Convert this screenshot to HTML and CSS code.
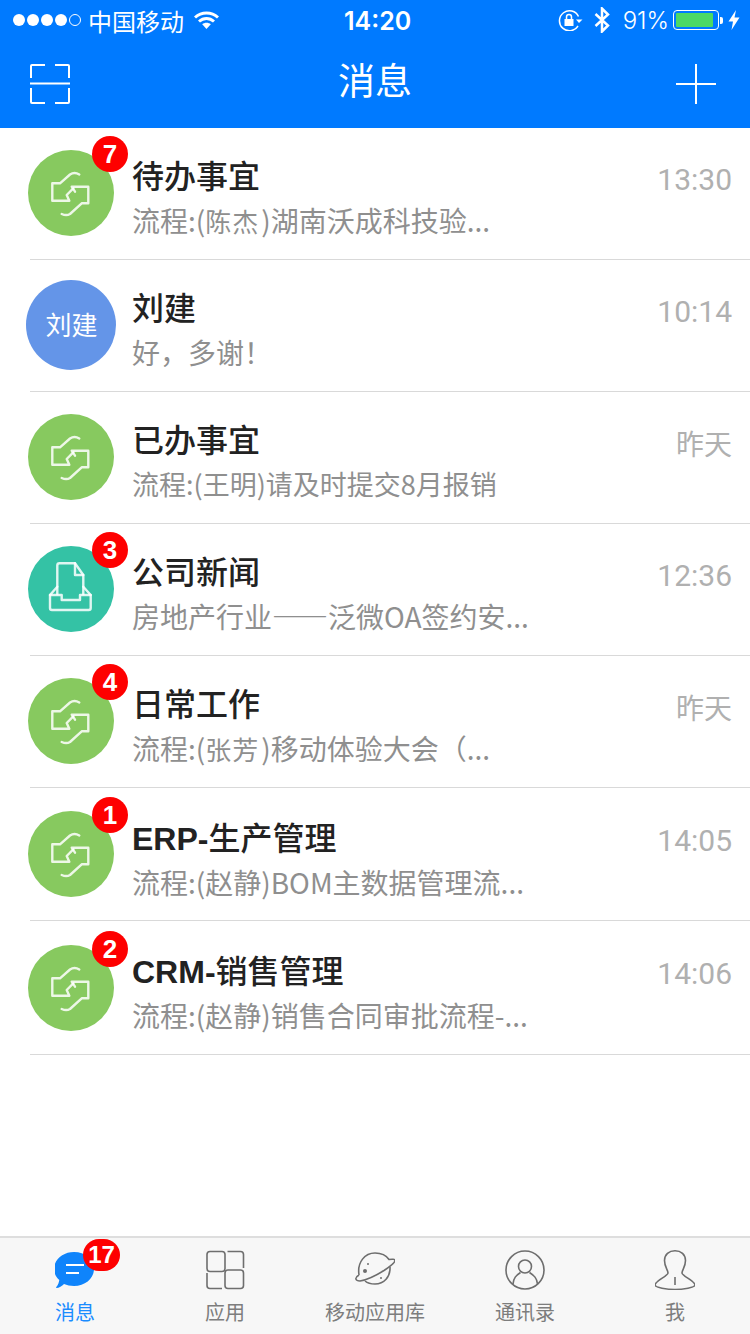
FILE: index.html
```html
<!DOCTYPE html>
<html lang="zh-CN">
    <head>
        <meta charset="UTF-8">
        <meta name="viewport" content="width=device-width, initial-scale=1.0">
        <title>消息</title>
        <link rel="stylesheet" href="styles.css">
    </head>
    <body>
        <svg class="defs" width="0" height="0">
            <symbol id="flow" viewBox="0 0 86 86">
                <path d="M51.3 24.500C48 22.500 45 22.500 42 24.500L32 33.300H24.300V50.700H41.300L38.700 45L45.300 38.300"/>
                <path d="M33.700 64C37 65.500 39.500 65.500 42 64L53.700 53.300H60.300V36.700H43.700L47 41.700"/>
            </symbol>
            <symbol id="inbox" viewBox="0 0 86 86">
                <path d="M29.300 48V19.500Q29.300 17.300 31.500 17.300H47L55.300 29V48"/>
                <path d="M47 17.300V29H55.300"/>
                <path d="M29.300 40.700L22 49V62Q22 64 24 64H60.700Q62.700 64 62.700 62V49L55.300 40.700"/>
                <path d="M22 49H33.700V54H52V49H62.700"/>
            </symbol>
        </svg>

        <div class="status-bar">
            <div class="status-left">
                <span class="signal">
                    <i class="dot"></i><i class="dot"></i><i class="dot"></i><i class="dot"></i><i class="dot dot-empty"></i>
                </span>
                <span class="carrier">中国移动</span>
                <svg class="wifi" width="25" height="20" viewBox="0 0 25 20">
                    <path d="M1 7.500C7.500 1.500 17.500 1.500 24 7.500"/>
                    <path d="M5 11.500C9.500 7.500 15.500 7.500 20 11.500"/>
                    <path class="wifi-tip" d="M8.200 14.200C10.500 12.200 14.500 12.200 16.800 14.200L12.500 19Z"/>
                </svg>
            </div>
            <span class="clock">14:20</span>
            <div class="status-right">
                <svg class="lock" width="25" height="22" viewBox="0 0 25 22">
                    <path class="lock-ring" d="M20 17A10 10 0 1 1 20.500 7.500"/>
                    <path class="lock-solid" d="M18 10.500H24.500L21 14Z"/>
                    <path class="lock-ring" d="M8.500 10V8A2.500 2.500 0 0 1 13.500 8V10"/>
                    <rect class="lock-solid" x="6.500" y="10" width="9" height="7"/>
                </svg>
                <svg class="bluetooth" width="16" height="26" viewBox="0 0 16 26">
                    <path d="M1.500 7L14 18.500L8 24.500V1.500L14 7.500L1.500 19"/>
                </svg>
                <span class="percent">91%</span>
                <span class="battery"><i class="battery-fill"></i></span>
                <i class="battery-nub"></i>
                <svg class="bolt" width="12" height="20" viewBox="0 0 12 20">
                    <path d="M8 0L0.500 11.500H5L3.500 20L11.500 7.500H6.500Z"/>
                </svg>
            </div>
        </div>

        <header class="nav-bar">
            <svg class="nav-icon" width="40" height="40" viewBox="0 0 40 40">
                <path d="M15 1H2Q1 1 1 2V14"/>
                <path d="M25 1H38Q39 1 39 2V14"/>
                <path d="M1 24V38Q1 39 2 39H15"/>
                <path d="M39 24V38Q39 39 38 39H25"/>
                <path d="M0 19.500H40"/>
            </svg>
            <h1 class="nav-title">消息</h1>
            <svg class="nav-icon" width="40" height="40" viewBox="0 0 40 40">
                <path d="M0 20H40"/>
                <path d="M20 0V40"/>
            </svg>
        </header>

        <main class="list">
            <div class="row">
                <div class="avatar avatar-green">
                    <svg class="avatar-icon"><use href="#flow"/></svg>
                    <span class="badge">7</span>
                </div>
                <div class="row-text">
                    <div class="row-title">待办事宜</div>
                    <div class="row-sub">流程:(<span class="name">陈杰</span>)湖南沃成科技验...</div>
                </div>
                <span class="row-time">13:30</span>
            </div>
            <div class="row">
                <div class="avatar avatar-blue">刘建</div>
                <div class="row-text">
                    <div class="row-title">刘建</div>
                    <div class="row-sub">好，多谢！</div>
                </div>
                <span class="row-time">10:14</span>
            </div>
            <div class="row">
                <div class="avatar avatar-green">
                    <svg class="avatar-icon"><use href="#flow"/></svg>
                </div>
                <div class="row-text">
                    <div class="row-title">已办事宜</div>
                    <div class="row-sub row-sub-small">流程:(王明)请及时提交8月报销</div>
                </div>
                <span class="row-time row-time-cn">昨天</span>
            </div>
            <div class="row">
                <div class="avatar avatar-teal">
                    <svg class="avatar-icon"><use href="#inbox"/></svg>
                    <span class="badge">3</span>
                </div>
                <div class="row-text">
                    <div class="row-title">公司新闻</div>
                    <div class="row-sub">房地产行业——泛微OA签约安...</div>
                </div>
                <span class="row-time">12:36</span>
            </div>
            <div class="row">
                <div class="avatar avatar-green">
                    <svg class="avatar-icon"><use href="#flow"/></svg>
                    <span class="badge">4</span>
                </div>
                <div class="row-text">
                    <div class="row-title">日常工作</div>
                    <div class="row-sub">流程:(<span class="name">张芳</span>)移动体验大会（...</div>
                </div>
                <span class="row-time row-time-cn">昨天</span>
            </div>
            <div class="row row-tall">
                <div class="avatar avatar-green">
                    <svg class="avatar-icon"><use href="#flow"/></svg>
                    <span class="badge">1</span>
                </div>
                <div class="row-text">
                    <div class="row-title"><span class="latin">ERP-</span>生产管理</div>
                    <div class="row-sub">流程:(赵静)BOM主数据管理流...</div>
                </div>
                <span class="row-time">14:05</span>
            </div>
            <div class="row row-taller">
                <div class="avatar avatar-green">
                    <svg class="avatar-icon"><use href="#flow"/></svg>
                    <span class="badge">2</span>
                </div>
                <div class="row-text">
                    <div class="row-title"><span class="latin">CRM-</span>销售管理</div>
                    <div class="row-sub">流程:(赵静)销售合同审批流程-...</div>
                </div>
                <span class="row-time">14:06</span>
            </div>
        </main>

        <nav class="tab-bar">
            <div class="tab tab-active">
                <div class="tab-icon">
                    <svg width="40" height="40" viewBox="1 0 40 40">
                        <path class="bubble" d="M20 2C31 2 40 9.500 40 19C40 28.500 31 36 20 36C16 36 13 35.300 10 34C8 36 5 38 2.500 38C2 38 2 37.500 2.300 37C4 35 5 32.500 5.300 30C2 27 0 23 0 19C0 9.500 9 2 20 2Z"/>
                        <path class="bubble-line" d="M12 15H30M12 23H25"/>
                    </svg>
                    <span class="badge badge-wide">17</span>
                </div>
                <span class="tab-label">消息</span>
            </div>
            <div class="tab">
                <div class="tab-icon">
                    <svg width="40" height="40" viewBox="0 0 40 40">
                        <rect x="2" y="1.500" width="18" height="20" rx="3"/>
                        <path d="M22.500 1.500H35.500Q38.500 1.500 38.500 4.500V18"/>
                        <path d="M2 23V35.500Q2 38.500 5 38.500H17"/>
                        <rect x="20" y="20" width="18.500" height="18.500" rx="3"/>
                    </svg>
                </div>
                <span class="tab-label">应用</span>
            </div>
            <div class="tab">
                <div class="tab-icon">
                    <svg width="40" height="40" viewBox="15 10 40 40">
                        <path d="M19 35C17 22 25 13 35 13C41 13 46 15 49 19.500C52 19 55 19 55 20.500C55 23 50 26.500 44 30.500C36 35.500 26 40 20 41C15.500 41 14 38 19 35"/>
                        <path d="M25 41C28 43.500 32 44 35 44C44 44 50.500 37 50 27"/>
                        <circle class="planet-dot" cx="25" cy="31" r="2"/>
                        <circle class="planet-dot" cx="28" cy="24" r="1"/>
                        <circle class="planet-dot" cx="41" cy="38" r="1"/>
                    </svg>
                </div>
                <span class="tab-label">移动应用库</span>
            </div>
            <div class="tab">
                <div class="tab-icon">
                    <svg width="40" height="40" viewBox="0 0 40 40">
                        <circle cx="20" cy="20" r="19"/>
                        <circle cx="20" cy="16.500" r="6.500"/>
                        <path d="M8 34C8.500 28 11 25.500 15.500 22.500"/>
                        <path d="M32.500 34C32 28 29 25.500 24.500 22.500"/>
                    </svg>
                </div>
                <span class="tab-label">通讯录</span>
            </div>
            <div class="tab">
                <div class="tab-icon">
                    <svg width="40" height="40" viewBox="0 0 40 40">
                        <path d="M13 23C13 20 9.500 17 9.500 10.500C9.500 4.500 14 .8 20 .8C26 .8 30.500 4.500 30.500 10.500C30.500 17 27 20 27 23C27 26 40 31 40 35C40 37.500 28 39.500 20 39.500C12 39.500 0 37.500 0 35C0 31 13 26 13 23Z"/>
                        <path d="M20 27V35"/>
                    </svg>
                </div>
                <span class="tab-label">我</span>
            </div>
        </nav>
    </body>
</html>
```

FILE: styles.css
```css
body {
    font-family: "Noto Sans CJK SC", "Liberation Sans", sans-serif;
    margin: 0;
    padding: 0;
    width: 750px;
    height: 1334px;
    display: flex;
    flex-direction: column;
    overflow: hidden;
    background-color: #fff;
}

.defs {
    display: none;
}

/* status bar */
.status-bar {
    height: 40px;
    background-color: #007aff;
    color: #fff;
    display: flex;
    align-items: center;
    justify-content: space-between;
    padding: 0 10px 0 13px;
    position: relative;
    font-family: Inter, "Noto Sans CJK SC", sans-serif;
}

.status-left,
.status-right {
    display: flex;
    align-items: center;
}

.signal {
    display: flex;
    gap: 2px;
}

.dot {
    width: 12px;
    height: 12px;
    border-radius: 50%;
    background-color: #fff;
    box-sizing: border-box;
}

.dot-empty {
    background-color: transparent;
    border: 1px solid #fff;
}

.carrier {
    font-size: 24px;
    font-family: "Noto Sans CJK SC", sans-serif;
    margin-left: 7px;
}

.wifi {
    margin-left: 10px;
}

.wifi path {
    fill: none;
    stroke: #fff;
    stroke-width: 3;
}

.wifi .wifi-tip {
    fill: #fff;
    stroke: none;
}

.clock {
    font-size: 25px;
    font-weight: 600;
    position: absolute;
    left: 344px;
    top: 6px;
}

.lock-ring {
    fill: none;
    stroke: #fff;
    stroke-width: 1.500;
}

.lock-solid {
    fill: #fff;
}

.bluetooth {
    margin-left: 11px;
}

.bluetooth path {
    fill: none;
    stroke: #fff;
    stroke-width: 2.500;
}

.percent {
    font-size: 24px;
    font-weight: 300;
    margin-left: 13px;
}

.battery {
    width: 46px;
    height: 20px;
    margin-left: 4px;
    border: 1px solid #fff;
    border-radius: 4px;
    box-sizing: border-box;
    padding: 2px;
    display: flex;
}

.battery-fill {
    width: 37px;
    background-color: #4cd964;
    border-radius: 1px;
}

.battery-nub {
    width: 3px;
    height: 7px;
    margin-left: 1px;
    background-color: #fff;
    border-radius: 0 2px 2px 0;
}

.bolt {
    margin-left: 5px;
}

.bolt path {
    fill: #fff;
}

/* nav bar */
.nav-bar {
    height: 88px;
    box-sizing: border-box;
    background-color: #007aff;
    display: flex;
    align-items: center;
    justify-content: space-between;
    padding: 0 34px 0 30px;
}

.nav-icon {
    fill: none;
    stroke: #fff;
    stroke-width: 2;
}

.nav-title {
    margin: 0 0 10px 4px;
    font-size: 37px;
    font-weight: 400;
    color: #fff;
}

/* message list */
.list {
    flex: 1;
}

.row {
    height: 132px;
    box-sizing: border-box;
    margin-left: 30px;
    padding-right: 18px;
    border-bottom: 1px solid #d9d9d9;
    display: flex;
    align-items: flex-start;
}

.row-tall {
    height: 133px;
}

.row-taller {
    height: 134px;
}

.avatar {
    flex-shrink: 0;
    width: 86px;
    height: 86px;
    margin: 22px 18px 0 -2px;
    border-radius: 50%;
    position: relative;
}

.row-tall .avatar {
    margin-top: 23px;
}

.row-taller .avatar {
    margin-top: 24px;
}

.avatar-green {
    background-color: #87c95f;
}

.avatar-teal {
    background-color: #34c2a5;
}

.avatar-blue {
    width: 90px;
    height: 90px;
    margin: 20px 16px 0 -4px;
    padding: 0 0 4px 1px;
    box-sizing: border-box;
    background-color: #6495e8;
    color: #fff;
    font-size: 26px;
    display: flex;
    align-items: center;
    justify-content: center;
}

.avatar-icon {
    width: 86px;
    height: 86px;
    display: block;
    fill: none;
    stroke: #fff;
    stroke-width: 2.400;
    stroke-opacity: .85;
    stroke-linejoin: round;
    stroke-linecap: round;
}

.badge {
    position: absolute;
    top: -14px;
    right: -14px;
    width: 36px;
    height: 36px;
    border-radius: 50%;
    background-color: #fe0000;
    color: #fff;
    font-family: "Liberation Sans", sans-serif;
    font-size: 26px;
    font-weight: 700;
    line-height: 36px;
    text-align: center;
}

.badge-wide {
    top: -11px;
    right: -25px;
    width: 37px;
    height: 32px;
    border-radius: 16px;
    font-size: 24px;
    line-height: 32px;
}

.row-text {
    flex: 1;
    min-width: 0;
    padding-top: 24px;
}

.row-tall .row-text,
.row-taller .row-text {
    padding-top: 26px;
}

.row-tall .row-sub,
.row-taller .row-sub {
    margin-top: -3px;
}

.row-title {
    font-size: 32px;
    font-weight: 500;
    line-height: 45px;
    color: #222;
}

.latin {
    font-family: "Liberation Sans", sans-serif;
    font-weight: 700;
}

.row-sub {
    font-size: 28px;
    line-height: 46px;
    color: #8f8f8f;
    white-space: nowrap;
}

.row-sub-small {
    font-size: 27px;
}

.name {
    font-size: 26px;
    letter-spacing: 1px;
    padding-right: 2px;
}

.row-time {
    margin-top: 32px;
    font-family: Roboto, "Liberation Sans", sans-serif;
    font-size: 30px;
    line-height: 40px;
    color: #b0b0b0;
}

.row-tall .row-time,
.row-taller .row-time {
    margin-top: 33px;
}

.row-time-cn {
    margin-top: 31px;
    font-family: "Noto Sans CJK SC", sans-serif;
    font-size: 28px;
}

/* tab bar */
.tab-bar {
    height: 98px;
    box-sizing: border-box;
    border-top: 2px solid #dedede;
    background-color: #f7f7f7;
    display: grid;
    grid-template-columns: repeat(5, 1fr);
}

.tab {
    display: flex;
    flex-direction: column;
    align-items: center;
    padding-top: 12px;
    color: #7d7d7d;
}

.tab-active {
    color: #1a8cff;
}

.tab-icon {
    width: 40px;
    height: 40px;
    position: relative;
}

.tab-icon svg {
    display: block;
    fill: none;
    stroke: #6e6e6e;
    stroke-width: 1.600;
}

.tab-icon .planet-dot {
    fill: #6e6e6e;
    stroke: none;
}

.tab-icon .bubble {
    fill: #0f84fb;
    stroke: none;
}

.tab-icon .bubble-line {
    stroke: #fff;
    stroke-width: 2;
}

.tab-label {
    font-size: 20px;
    line-height: 28px;
    margin-top: 8px;
    white-space: nowrap;
}
```
